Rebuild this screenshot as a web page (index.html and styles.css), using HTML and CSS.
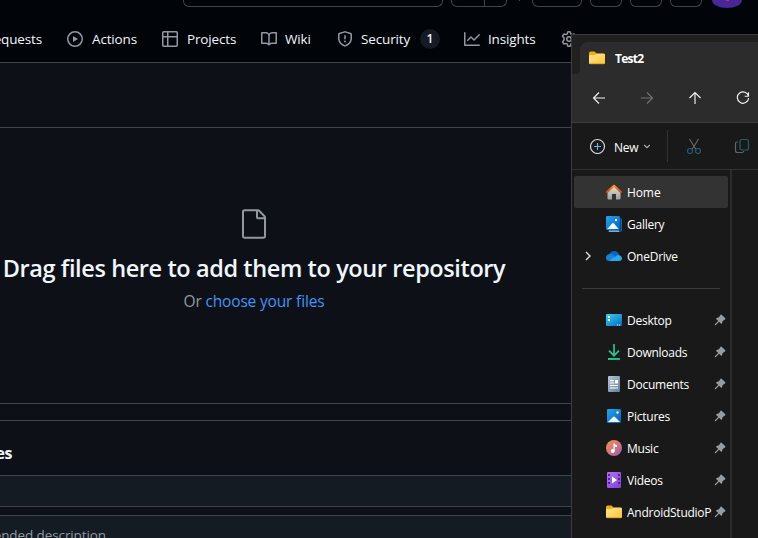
FILE: index.html
```
<!DOCTYPE html>
<html lang="en">
<head>
<meta charset="utf-8">
<title>Upload files</title>
<link rel="stylesheet" href="styles.css">
</head>
<body>
<svg class="defs" width="0" height="0">
  <defs>
    <linearGradient id="gold" x1="0" y1="0" x2="1" y2="1"><stop offset="0" stop-color="#ffe59b"/><stop offset="1" stop-color="#ffc533"/></linearGradient>
    <linearGradient id="blue" x1="0" y1="0" x2="1" y2="1"><stop offset="0" stop-color="#27a5ec"/><stop offset="1" stop-color="#0060bd"/></linearGradient>
    <linearGradient id="cyan" x1="0" y1="0" x2="1" y2="1"><stop offset="0" stop-color="#35d5e9"/><stop offset="1" stop-color="#0869c6"/></linearGradient>
    <linearGradient id="silver" x1="0" y1="0" x2="0" y2="1"><stop offset="0" stop-color="#e5e5e5"/><stop offset="1" stop-color="#9d9d9d"/></linearGradient>
    <linearGradient id="roof" x1="0" y1="0" x2="0" y2="1"><stop offset="0" stop-color="#ff961f"/><stop offset="1" stop-color="#d34c12"/></linearGradient>
    <linearGradient id="green" x1="0" y1="0" x2="1" y2="1"><stop offset="0" stop-color="#35d07f"/><stop offset="1" stop-color="#14a39a"/></linearGradient>
    <linearGradient id="steel" x1="0" y1="0" x2="1" y2="1"><stop offset="0" stop-color="#b7c8da"/><stop offset="1" stop-color="#5f7d9c"/></linearGradient>
    <linearGradient id="tune" x1="0" y1="0" x2="1" y2="1"><stop offset="0" stop-color="#f5925b"/><stop offset=".5" stop-color="#d17877"/><stop offset="1" stop-color="#9457b5"/></linearGradient>
    <linearGradient id="violet" x1="0" y1="0" x2="1" y2="1"><stop offset="0" stop-color="#b573f0"/><stop offset="1" stop-color="#7d3fd9"/></linearGradient>
    <symbol id="folder" viewBox="0 0 16 16"><path fill="#f5ab0c" d="M0 3Q0 1.500 1.500 1.500H5.500L7.500 3.500H14.500Q16 3.500 16 5V8H0Z"/><path fill="url(#gold)" d="M0 6Q0 5 1 5H5.500L7.500 3.700H15Q16 3.700 16 4.700V13Q16 14 15 14H1Q0 14 0 13Z"/><path stroke="#dda329" d="M1 13.700H15"/></symbol>
    <symbol id="pin" viewBox="0 0 12 12"><path fill="#949da3" d="M6.500.8Q7.200.2 7.900.9L11.100 4.100Q11.700 4.800 11 5.400L8.700 6.900 8 9.300Q7.600 10.200 6.900 9.600L5 7.700 1.700 11.200.8 11.200.8 10.300 4.200 7 2.400 5.200Q1.800 4.400 2.700 4L5 3.300Z"/></symbol>
  </defs>
</svg>
<div class="screen">
  <main class="page">
    <header class="topbar">
      <span class="box search"></span>
      <span class="box split"><i></i></span>
      <span class="tick"></span>
      <span class="box wide"></span><span class="box"></span><span class="box"></span><span class="box"></span>
      <span class="avatar"><i></i></span>
    </header>
    <nav class="tabs">
      <a class="tab pulls"><span>Pull requests</span></a>
      <a class="tab actions"><svg viewBox="0 0 16 16"><path d="M8 0a8 8 0 1 1 0 16A8 8 0 0 1 8 0ZM1.500 8a6.500 6.500 0 1 0 13 0 6.500 6.500 0 0 0-13 0Zm4.879-2.773 4.264 2.559a.25.25 0 0 1 0 .428l-4.264 2.559A.25.25 0 0 1 6 10.559V5.442a.25.25 0 0 1 .379-.215Z"/></svg><span>Actions</span></a>
      <a class="tab projects"><svg viewBox="0 0 16 16"><path d="M0 1.750C0 .784.784 0 1.750 0h12.500C15.216 0 16 .784 16 1.750v12.500A1.750 1.750 0 0 1 14.250 16H1.750A1.750 1.750 0 0 1 0 14.250ZM6.500 6.500v8h7.750a.25.25 0 0 0 .25-.25V6.500Zm8-1.500V1.750a.25.25 0 0 0-.25-.25H6.500V5Zm-13 1.500v7.750c0 .138.112.25.25.25H5v-8ZM5 5V1.500H1.750a.25.25 0 0 0-.25.25V5Z"/></svg><span>Projects</span></a>
      <a class="tab wiki"><svg viewBox="0 0 16 16"><path d="M0 1.750A.75.75 0 0 1 .75 1h4.253c1.227 0 2.317.59 3 1.501A3.743 3.743 0 0 1 11.006 1h4.245a.75.75 0 0 1 .75.750v10.500a.75.75 0 0 1-.75.750h-4.507a2.250 2.250 0 0 0-1.591.659l-.622.621a.75.75 0 0 1-1.060 0l-.622-.621A2.250 2.250 0 0 0 5.258 13H.75a.75.75 0 0 1-.75-.75Zm7.251 10.324.004-5.073-.002-2.253A2.250 2.250 0 0 0 5.003 2.500H1.500v9h3.757a3.750 3.750 0 0 1 1.994.574ZM8.755 4.750l-.004 7.322a3.752 3.752 0 0 1 1.992-.572H14.500v-9h-3.495a2.250 2.250 0 0 0-2.250 2.250Z"/></svg><span>Wiki</span></a>
      <a class="tab security"><svg viewBox="0 0 16 16"><path d="M7.467.133a1.748 1.748 0 0 1 1.066 0l5.250 1.680A1.750 1.750 0 0 1 15 3.480V7c0 1.566-.32 3.182-1.303 4.682-.983 1.498-2.585 2.813-5.032 3.855a1.697 1.697 0 0 1-1.330 0c-2.447-1.042-4.049-2.357-5.032-3.855C1.320 10.182 1 8.566 1 7V3.480a1.750 1.750 0 0 1 1.217-1.667Zm.61 1.429a.25.25 0 0 0-.153 0l-5.250 1.680a.25.25 0 0 0-.174.238V7c0 1.358.275 2.666 1.057 3.860.784 1.194 2.121 2.340 4.366 3.297a.196.196 0 0 0 .154 0c2.245-.956 3.582-2.104 4.366-3.298C13.225 9.666 13.500 8.360 13.500 7V3.480a.251.251 0 0 0-.174-.237l-5.250-1.680ZM8.750 4.750v3a.75.75 0 0 1-1.500 0v-3a.75.75 0 0 1 1.500 0ZM9 10.500a1 1 0 1 1-2 0 1 1 0 0 1 2 0Z"/></svg><span>Security</span><b class="count">1</b></a>
      <a class="tab insights"><svg viewBox="0 0 16 16"><path d="M1.500 1.750V13.500h13.750a.75.75 0 0 1 0 1.500H.75a.75.75 0 0 1-.75-.75V1.750a.75.75 0 0 1 1.500 0Zm14.280 2.530-5.250 5.250a.75.75 0 0 1-1.060 0L7 7.060 4.280 9.780a.751.751 0 0 1-1.060-1.060l3.250-3.250a.75.75 0 0 1 1.060 0L10 7.940l4.720-4.720a.751.751 0 0 1 1.060 1.060Z"/></svg><span>Insights</span></a>
      <a class="tab settings"><svg viewBox="0 0 16 16"><path fill="none" stroke="#9198a1" stroke-width="1.500" stroke-linejoin="round" d="M6.700 1Q8 .6 9.300 1L9.700 2.900 11 3.600 13 3Q14 4 14.500 5.200L13 6.700V9.300L14.500 10.800Q14 12 13 13L11 12.400 9.700 13.100 9.300 15Q8 15.400 6.700 15L6.300 13.100 5 12.400 3 13Q2 12 1.500 10.800L3 9.300V6.700L1.500 5.200Q2 4 3 3L5 3.600 6.300 2.900Z"/><circle cx="8" cy="8" r="2.250" fill="none" stroke="#9198a1" stroke-width="1.500"/></svg><span>Settings</span></a>
    </nav>
    <div class="subhead"></div>
    <section class="drop">
      <svg class="file" viewBox="0 0 24 24"><path d="M3 3a2 2 0 0 1 2-2h9.982a2 2 0 0 1 1.414.586l4.018 4.018A2 2 0 0 1 21 7.018V21a2 2 0 0 1-2 2H4.750A1.750 1.750 0 0 1 3 21.250Zm2-.5a.5.500 0 0 0-.5.500v18.250c0 .138.112.25.25.25H19a.5.500 0 0 0 .5-.5V8.500h-4a2 2 0 0 1-2-2v-4Zm10 0v4a.5.500 0 0 0 .5.500h4a.5.500 0 0 0-.146-.336l-4.018-4.018A.5.500 0 0 0 15 2.500Z"/></svg>
      <h1><span>Drag files here to add them to your repository</span></h1>
      <p><span>Or <a>choose your files</a></span></p>
    </section>
    <section class="commit">
      <h2>Commit changes</h2>
      <div class="field title-field"></div>
      <div class="field desc-field"><span>Add an optional extended description</span></div>
    </section>
  </main>

  <aside class="window">
    <div class="strip"><i class="edge"></i><div class="wtab"><svg><use href="#folder"/></svg><b>Test2</b></div></div>
    <div class="navbar">
      <svg viewBox="0 0 14 14"><path d="M13 7H1.500M7 1.500 1.500 7 7 12.500"/></svg>
      <svg class="off" viewBox="0 0 14 14"><path d="M1 7H12.500M7 1.500 12.500 7 7 12.500"/></svg>
      <svg viewBox="0 0 14 14"><path d="M7 13V1.500M1.500 7 7 1.500 12.500 7"/></svg>
      <svg viewBox="0 0 14 14"><path d="M12.600 5.400A5.700 5.700 0 1 0 12.700 7M12.500 1.300V5.200H8.700"/></svg>
    </div>
    <div class="tools">
      <svg class="new" viewBox="0 0 16 16"><circle cx="7.500" cy="8.500" r="7" stroke="#d6d6d6"/><path stroke="#55b9ee" d="M7.500 5V12M4 8.500H11"/></svg>
      <span>New</span>
      <svg class="chev" viewBox="0 0 8 8"><path stroke="#aaa" d="M1.200 3 4 5.700 6.800 3"/></svg>
      <i></i>
      <svg class="cut" viewBox="0 0 16 16"><path stroke="#666" d="M3.500 1 10 11.500M12.500 1 6 11.500"/><circle cx="4" cy="13" r="2.500" stroke="#275a75"/><circle cx="12" cy="13" r="2.500" stroke="#275a75"/></svg>
      <svg class="copy" viewBox="0 0 16 16"><path stroke="#646464" d="M4 4H3Q1.500 4 1.500 5.500V12.500Q1.500 14.500 3.500 14.500H8Q9.500 14.500 9.800 13"/><rect x="6" y="1.500" width="8.500" height="10.500" rx="2" stroke="#275a75"/></svg>
    </div>
    <div class="body">
      <div class="side">
        <div class="row on"><svg viewBox="0 0 16 16"><path fill="url(#silver)" d="M1.500 7 8 1.500 14.500 7V14.500Q14.500 15.500 13.500 15.500H10V10H6V15.500H2.500Q1.500 15.500 1.500 14.500Z"/><path fill="none" stroke="url(#roof)" stroke-width="2.200" stroke-linejoin="round" stroke-linecap="round" d="M1.100 8 8 1.800 14.900 8"/></svg><span class="wide-text">Home</span></div>
        <div class="row"><svg viewBox="0 0 16 16"><path fill="#0f65b5" d="M14.500 2Q16 2 16 3.500V13.500Q16 16 13.500 16H4Q2 16 2 14.500H14.500Z"/><path stroke="#70b8ed" stroke-width="1.500" d="M3 15.200H13"/><rect width="14" height="14" rx="1.300" fill="url(#blue)"/><path fill="#f4faff" d="M1.300 13 6 7.500Q7 6.500 8 7.500L12.700 13Z"/><circle cx="10" cy="4" r="1.200" fill="#fff"/></svg><span>Gallery</span></div>
        <div class="row"><svg class="expand" viewBox="0 0 8 12"><path d="M2 2 6 6 2 10"/></svg><svg viewBox="0 0 16 16"><path fill="#0c63bd" d="M3 7Q4.500 3 8 3Q12 3 13.300 7L9 11Z"/><path fill="#1482d8" d="M4 6Q7 5.500 10 9L7 13H3.500Q0 13 0 9.700Q.2 6.300 4 6Z"/><path fill="#2aa7ef" d="M4 13Q5 10 9 9.300Q11 6.300 13.500 7.300Q16 8.500 16 10.300Q16 13 13 13Z"/></svg><span>OneDrive</span></div>
        <hr>
        <div class="row"><svg viewBox="0 0 16 16"><rect y="2" width="16" height="12" rx="1" fill="url(#cyan)"/><path fill="#fff" d="M2 4H4V6H2ZM2 7H4V9H2ZM11 12.500H12V13.500H11ZM13 12.500H14V13.500H13Z"/></svg><span>Desktop</span><svg class="pin"><use href="#pin"/></svg></div>
        <div class="row"><svg viewBox="0 0 16 16"><path fill="none" stroke="#2ac58a" stroke-width="1.700" d="M8 0V11.500M3 6.700 8 11.700 13 6.700"/><path fill="url(#green)" d="M2 14H14V16H2Z"/></svg><span>Downloads</span><svg class="pin"><use href="#pin"/></svg></div>
        <div class="row"><svg viewBox="0 0 16 16"><rect x="2" width="12" height="16" rx="1" fill="url(#steel)"/><path stroke="#fff" stroke-width="1.200" d="M4 4.600H8M4 7H8M4 9.500H12M4 12H12"/><path fill="#fff" d="M9 4H12V7.500H9Z"/></svg><span>Documents</span><svg class="pin"><use href="#pin"/></svg></div>
        <div class="row"><svg viewBox="0 0 16 16"><rect x="1" y="1" width="14" height="14" rx="1" fill="url(#blue)"/><path fill="#f4faff" d="M2 14 7 9Q8 8 9 9L14 14Z"/><circle cx="11.500" cy="4.500" r="1.200" fill="#fff"/></svg><span>Pictures</span><svg class="pin"><use href="#pin"/></svg></div>
        <div class="row"><svg viewBox="0 0 16 16"><circle cx="8" cy="8" r="8" fill="url(#tune)"/><circle cx="6.700" cy="11" r="2" fill="#fff"/><path fill="#fff" d="M7.500 3.500H8.700Q9 5 11 5.300V7Q9.300 7 8.700 6.300V11H7.500Z"/></svg><span>Music</span><svg class="pin"><use href="#pin"/></svg></div>
        <div class="row"><svg viewBox="0 0 16 16"><rect x="1" width="14" height="16" rx="1" fill="url(#violet)"/><path fill="#4c2498" d="M2 2H4V4H2ZM2 6H4V8H2ZM2 10H4V12H2ZM12 2H14V4H12ZM12 6H14V8H12ZM12 10H14V12H12Z"/><path fill="#fff" d="M6 4.500 11 8 6 11.500Z"/></svg><span>Videos</span><svg class="pin"><use href="#pin"/></svg></div>
        <div class="row"><svg><use href="#folder"/></svg><span>AndroidStudioProjects</span><svg class="pin"><use href="#pin"/></svg></div>
      </div>
    </div>
  </aside>
</div>
</body>
</html>
```

FILE: styles.css
```
* { box-sizing: border-box; }
body { margin: 0; background: #0d1117; font-family: "Open Sans", "Noto Sans", sans-serif; }
.defs { position: absolute; }
.screen { position: relative; width: 758px; height: 538px; overflow: hidden; }
.page { width: 758px; height: 538px; color: #f0f6fc; }

.topbar { height: 16px; padding-left: 183px; background: #010409; display: flex; align-items: flex-start; }
.box { width: 32px; height: 7px; margin-right: 8px; border: 1px solid #3d444d; border-top: 0; border-radius: 0 0 6px 6px; flex: none; }
.search { width: 260px; }
.split { width: 56px; margin-right: 12px; }
.split i { display: block; width: 33px; height: 6px; border-right: 1px solid #3d444d; }
.tick { width: 1px; height: 1px; margin-right: 12px; background: #3d444d; }
.wide { width: 50px; }
.avatar { width: 30px; height: 8px; margin-left: 2px; border-radius: 0 0 15px 15px / 0 0 8px 8px; background: #482698; display: flex; justify-content: center; }
.avatar i { width: 3px; height: 1px; background: #b23282; }

.tabs { height: 47px; background: #010409; border-bottom: 1px solid #3d444d; display: flex; align-items: center; font-size: 13.5px; letter-spacing: -.15px; }
.tab { display: flex; align-items: center; flex: none; gap: 9px; height: 46px; white-space: nowrap; }
.tab svg { width: 16px; height: 16px; fill: #9198a1; flex: none; }
.pulls { width: 67px; justify-content: flex-end; padding-right: 25px; overflow: hidden; }
.actions { width: 95px; }
.projects { width: 99px; }
.wiki { width: 76px; gap: 8px; }
.security { width: 127px; gap: 8px; }
.security span { width: 51px; }
.insights { width: 97px; gap: 8px; }
.settings span { padding-bottom: 2px; }
.count { width: 20px; height: 20px; border-radius: 10px; background: #151b23; font-size: 12px; line-height: 20px; font-weight: 600; text-align: center; letter-spacing: 0; }

.subhead { height: 65px; border-bottom: 1px solid #3d444d; }
.drop { width: 758px; height: 276px; padding: 80px 250px 0 0; border-bottom: 1px solid #3d444d; display: flex; flex-direction: column; align-items: center; }
.file { width: 32px; height: 32px; fill: #9198a1; }
.drop h1 { margin: 10px 0 0; height: 36px; font-size: 23.5px; line-height: 36px; font-weight: 600; letter-spacing: -.4px; white-space: nowrap; }
.drop p { margin: 3px 0 0; font-size: 15.5px; line-height: 24px; color: #9198a1; letter-spacing: -.17px; white-space: nowrap; }
.drop a { color: #4493f8; }
.commit { margin-top: 16px; height: 118px; border-top: 1px solid #3d444d; overflow: hidden; }
.commit h2 { margin: 20px 0 10px; width: 12px; height: 24px; font-size: 16px; line-height: 24px; display: flex; justify-content: flex-end; white-space: nowrap; letter-spacing: -.4px; }
.field { height: 32px; background: #151b23; border: 1px solid #3d444d; border-width: 1px 0; }
.desc-field { margin-top: 8px; height: 60px; padding-top: 9px; width: 758px; font-size: 13.5px; line-height: 20px; color: #9198a1; }
.desc-field span { width: 106px; display: flex; justify-content: flex-end; white-space: nowrap; letter-spacing: -.1px; }

.window { position: absolute; left: 571px; top: 34px; width: 200px; height: 520px; background: #191919; border: 1px solid #3c3c3f; color: #fff; overflow: hidden; }
.strip { height: 39px; background: linear-gradient(#202020 20px, #2c2c2c 20px); display: flex; align-items: flex-end; }
.edge { width: 8px; height: 39px; background: #202020; border-radius: 0 0 4px 0; }
.wtab { flex: 1; height: 39px; border-top: 7px solid #202020; background: #202020; display: flex; align-items: center; }
.wtab { border: 0; padding: 7px 0 0 9px; background: radial-gradient(circle at 8px 15px, #2c2c2c 7.5px, #202020 8.5px) 0 0 / 8px 15px no-repeat, linear-gradient(#202020 7px, #2c2c2c 7px); }
.wtab svg { width: 16px; height: 16px; margin-right: 10px; }
.wtab b { font-size: 12px; letter-spacing: -.75px; line-height: 16px; font-weight: 700; padding-top: 1px; }
.navbar { height: 49px; padding-left: 20px; display: flex; align-items: center; gap: 34px; background: #2c2c2c; border-bottom: 1px solid #3c3c3c; }
.navbar svg { width: 14px; height: 14px; fill: none; stroke: #f2f2f2; stroke-width: 1.15; flex: none; }
.navbar .off { stroke: #727272; }
.tools { height: 47px; padding-left: 18px; display: flex; align-items: center; border-bottom: 1px solid #333; font-size: 12px; flex: none; }
.tools svg { width: 16px; height: 16px; fill: none; stroke-width: 1.2; flex: none; }
.tools span { width: 28px; margin-left: 8px; padding-top: 3px; letter-spacing: -.3px; flex: none; }
.tools .chev { width: 8px; height: 8px; margin-left: 1px; }
.tools i { width: 1px; height: 32px; background: #323232; margin: 0 18px 0 16px; }
.tools .copy { margin-left: 32px; }
.body { height: 370px; }
.side { width: 160px; height: 370px; padding: 6px 2px 0; border-right: 2px solid #2b2b2b; }
.row { width: 154px; height: 32px; padding: 0 0 0 32px; display: flex; align-items: center; font-size: 12px; letter-spacing: -.25px; }
.row.on { background: #333; border-radius: 2px; }
.row svg { width: 16px; height: 16px; flex: none; }
.row span { width: 85px; margin-left: 5px; padding-top: 1px; overflow: hidden; white-space: nowrap; line-height: 20px; }
.row .wide-text { letter-spacing: -.1px; }
.row .pin { width: 12px; height: 12px; margin-left: 2px; }
.row .expand { width: 8px; height: 12px; margin: 0 14px 0 -22px; fill: none; stroke: #e0e0e0; stroke-width: 1.4; }
hr { width: 138px; height: 1px; margin: 16px 0 15px 8px; border: 0; background: #3a3a3a; }
```
